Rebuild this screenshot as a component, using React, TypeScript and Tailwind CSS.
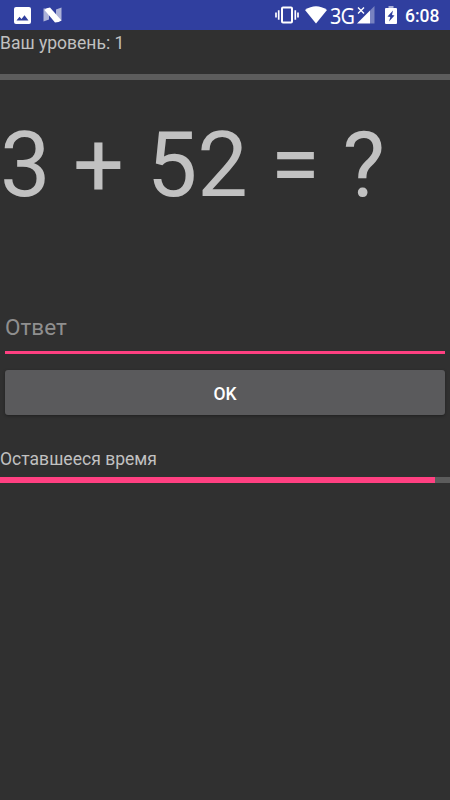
import { useState } from 'react'

export default function App() {
  const [answer, setAnswer] = useState('')

  return (
    <div className="flex h-[800px] w-[450px] flex-col overflow-hidden bg-[#303030] font-['Roboto',sans-serif] text-[#c1c1c1]">
      <StatusBar />

      <div className="h-[44px] pt-[2px] text-[17.5px] leading-[22px]">Ваш уровень: 1</div>
      <Progress value={0} />

      {/* Current task */}
      <div className="h-[225px] pt-[33px] text-[90px] leading-[106px] tracking-[0.1px] whitespace-pre">3 + 52 = ?</div>

      <div className="mx-[5px] h-[49px] border-b-[3px] border-[#ff4081]">
        <input
          className="block h-[45px] w-full bg-transparent text-[22.5px] leading-[45px] outline-none placeholder:text-[#8f8f8f]"
          placeholder="Ответ"
          value={answer}
          onChange={(e) => setAnswer(e.target.value)}
        />
      </div>

      <button className="mx-[5px] mt-4 h-[45px] rounded-[3px] bg-[#5a5a5c] pt-[3px] text-[17.5px] font-medium text-white shadow-[0_1px_3px_rgba(0,0,0,0.35)]">
        OK
      </button>

      <div className="mt-[33px] h-[29px] text-[17.5px] leading-[22px] tracking-[0.03px]">Оставшееся время</div>
      <Progress value={96.7} />
    </div>
  )
}

function Progress({ value }: { value: number }) {
  return (
    <div className="h-[6px] w-full shrink-0 bg-[#5c5c5c]">
      <div className="h-full bg-[#ff4081]" style={{ width: `${value}%` }} />
    </div>
  )
}

function StatusBar() {
  return (
    <div className="flex h-[30px] shrink-0 items-center bg-[#303f9f] text-white">
      <svg className="ml-[14px]" width="17" height="17" viewBox="0 0 17 17">
        <rect width="17" height="17" rx="2" fill="#fff" />
        <path d="M2.5 13.5 5.5 9.8l2 2.2 3-3.8 4 5.3z" fill="#303f9f" />
      </svg>
      <svg className="ml-[12px]" width="19" height="16" viewBox="0 0 19 16">
        <path d="M.5 1.5H6v11L.5 14.5zM13 2.5l5.5-2v13H13z" fill="#fff" opacity=".6" />
        <path d="M1.5 3Q3.5.5 7 .5L18.5 13.5Q16 15.5 12 15.5z" fill="#fff" />
      </svg>

      {/* Vibrate */}
      <svg className="ml-[213px]" width="24" height="18" viewBox="0 0 24 18" fill="none" stroke="#fff">
        <rect x="7" y="1.5" width="10" height="15" rx="1" strokeWidth="2" />
        <path d="M3.7 4.2v9.6M20.3 4.2v9.6M1 6.5v5M23 6.5v5" strokeWidth="1.7" />
      </svg>
      {/* Wi-Fi */}
      <svg className="ml-[6px]" width="22" height="18" viewBox="0 0 22 18">
        <path d="M0 4Q11-3.5 22 4L11 17.5z" fill="#fff" />
      </svg>
      <span className="ml-[3px] w-[27px] shrink-0 origin-left scale-x-90 font-['Noto_Sans',sans-serif] text-[22px] leading-7 tracking-[-0.8px]">
        3G
      </span>
      {/* Signal without data */}
      <svg width="18" height="18" viewBox="0 0 18 18">
        <path d="M13 4.5 17.5 0v17.5H13z" fill="#fff" opacity=".35" />
        <path d="M0 17.5 13 4.5v13z" fill="#fff" />
        <path d="m1 1.5 6 6m0-6-6 6" stroke="#fff" strokeWidth="1.4" />
      </svg>
      {/* Charging battery */}
      <svg className="ml-[10px]" width="12" height="18" viewBox="0 0 12 18">
        <path d="M3.5 0h5v2.5h-5z" fill="#fff" opacity=".6" />
        <path d="M1 2h10q1 0 1 1v14q0 1-1 1H1q-1 0-1-1V3q0-1 1-1z" fill="#fff" />
        <path d="M8 4.5 2.5 10.5l2.8.5L4 15.5l5.5-6L7 9z" fill="#303f9f" />
      </svg>
      <span className="ml-[8px] pt-px text-[17.5px] font-medium leading-6">6:08</span>
    </div>
  )
}
